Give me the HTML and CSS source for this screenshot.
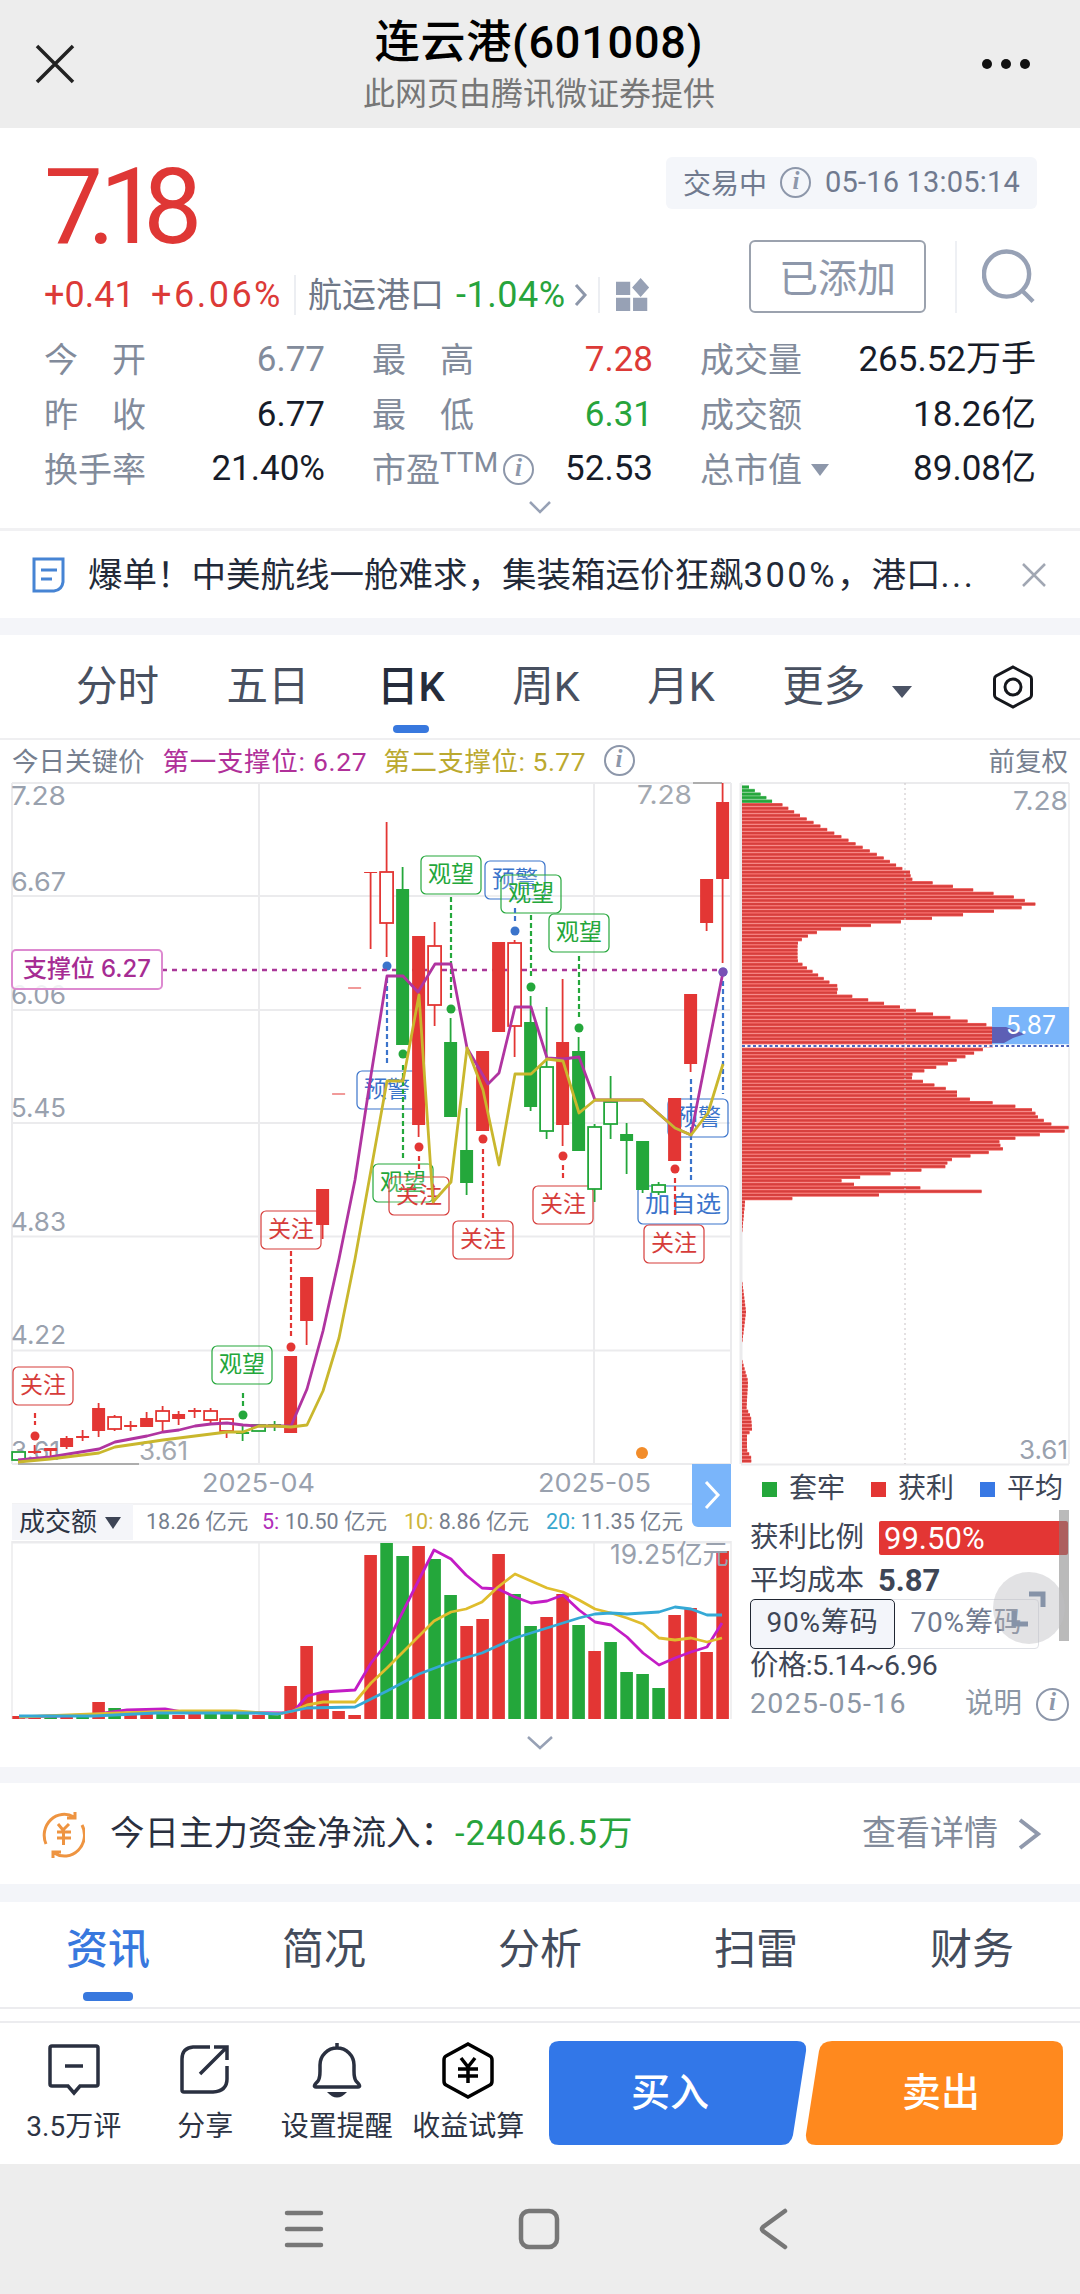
FILE: index.html
```html
<!DOCTYPE html>
<html lang="zh-CN">
<head>
  <meta charset="UTF-8">
  <meta name="viewport" content="width=device-width, initial-scale=1.0">
  <title>连云港(601008)</title>
  <link rel="stylesheet" href="styles.css">
</head>
<body>
  <header class="topbar">
    <svg class="topbar-close" width="40" height="40" viewBox="0 0 40 40"><path d="M2 2L38 38M38 2L2 38" /></svg>
    <div class="topbar-title">
      <h1>连云港(601008)</h1>
      <p>此网页由腾讯微证券提供</p>
    </div>
    <svg class="topbar-more" width="50" height="12" viewBox="0 0 50 12"><circle cx="6" cy="6" r="5" /><circle cx="25" cy="6" r="5" /><circle cx="44" cy="6" r="5" /></svg>
  </header>

  <section class="quote">
    <div class="quote-top">
      <div class="quote-left">
        <div class="price">7.18</div>
        <div class="change">
          <span class="red diff">+0.41</span>
          <span class="red percent">+6.06%</span>
          <span class="sector">航运港口</span>
          <span class="green sector-percent">-1.04%</span>
          <svg class="sector-arrow" width="14" height="24" viewBox="0 0 14 24"><path d="M2 2L11 12L2 22" /></svg>
          <svg class="blocks" width="38" height="36" viewBox="0 0 38 36"><path d="M0 4h15v14H0zM0 21h15v14H0zM18 21h15v14H18zM26 0l9 10-9 10-9-10z" /></svg>
        </div>
      </div>
      <div class="quote-right">
        <div class="status">交易中 <i class="info">i</i> <span>05-16 13:05:14</span></div>
        <div class="actions">
          <button class="added">已添加</button>
          <svg class="search" width="56" height="56" viewBox="0 0 56 56"><circle cx="25" cy="25" r="23" /><path d="M41 42L52 53" /></svg>
        </div>
      </div>
    </div>
    <div class="stats">
      <div class="stat"><span class="label"><b>今</b><b>开</b></span><span class="gray">6.77</span></div>
      <div class="stat"><span class="label"><b>最</b><b>高</b></span><span class="red">7.28</span></div>
      <div class="stat"><span class="label">成交量</span><span>265.52万手</span></div>
      <div class="stat"><span class="label"><b>昨</b><b>收</b></span><span>6.77</span></div>
      <div class="stat"><span class="label"><b>最</b><b>低</b></span><span class="green">6.31</span></div>
      <div class="stat"><span class="label">成交额</span><span>18.26亿</span></div>
      <div class="stat"><span class="label">换手率</span><span>21.40%</span></div>
      <div class="stat"><span class="label ttm">市盈<small>TTM</small> <i class="info">i</i></span><span>52.53</span></div>
      <div class="stat"><span class="label">总市值<em class="triangle"></em></span><span>89.08亿</span></div>
    </div>
    <svg class="expand" width="26" height="16" viewBox="0 0 26 16"><path d="M3 3L13 13L23 3" /></svg>
  </section>

  <section class="news">
    <svg class="news-icon" width="33" height="36" viewBox="0 0 33 36"><path d="M2 2H31V25Q30 33 22 34H2ZM9 13H25M9 22H20" /></svg>
    <p>爆单！中美航线一舱难求，集装箱运价狂飙<b>300%</b>，港口<b>...</b></p>
    <svg class="news-close" width="26" height="26" viewBox="0 0 26 26"><path d="M2 2L24 24M24 2L2 24" /></svg>
  </section>

  <nav class="periods">
    <span>分时</span>
    <span>五日</span>
    <span class="active">日K</span>
    <span>周K</span>
    <span>月K</span>
    <span>更多<em class="triangle"></em></span>
    <svg class="settings" width="42" height="44" viewBox="0 0 42 44"><path d="M21 2L38 11Q39.500 12 39.500 14V30Q39.500 32 38 33L21 42L4 33Q2.500 32 2.500 30V14Q2.500 12 4 11Z" /><circle cx="21" cy="22" r="8" /></svg>
  </nav>

  <div class="keyprice">
    <span>今日关键价</span>
    <span class="magenta">第一支撑位: 6.27</span>
    <span class="olive">第二支撑位: 5.77</span>
    <i class="info">i</i>
    <span class="adjust">前复权</span>
  </div>

  <section class="charts">
    <div class="charts-left">
      <svg id="kline" width="736" height="721" viewBox="0 782 736 721"></svg>
      <div class="volume-head">
        <span class="volume-type">成交额<em class="triangle"></em></span>
        <span class="v0">18.26 亿元</span>
        <span class="v5"><b>5:</b> 10.50 亿元</span>
        <span class="v10"><b>10:</b> 8.86 亿元</span>
        <span class="v20"><b>20:</b> 11.35 亿元</span>
      </div>
      <svg id="volume" width="736" height="180" viewBox="0 1541 736 180"></svg>
      <div class="drawer"><svg width="20" height="32" viewBox="0 0 20 32"><path d="M4 3L16 16L4 29" /></svg></div>
    </div>
    <div class="charts-right">
      <svg id="chips" width="344" height="684" viewBox="736 782 344 684"></svg>
      <div class="legend">
        <span class="trapped">套牢</span>
        <span class="profit">获利</span>
        <span class="average">平均</span>
      </div>
      <div class="chip-row">获利比例<span class="profit-bar">99.50%</span></div>
      <div class="chip-row cost">平均成本<strong>5.87</strong></div>
      <div class="chip-tabs"><span class="active">90%筹码</span><span>70%筹码</span></div>
      <div class="chip-row range">价格:5.14~6.96</div>
      <div class="chip-row date"><b>2025-05-16</b><span>说明</span><i class="info">i</i></div>
      <div class="scrollbar"></div>
      <div class="zoom-button"><svg width="72" height="72" viewBox="0 0 72 72"><path d="M36 22H50V35M21 39V52H35" /></svg></div>
    </div>
  </section>
  <svg class="expand more-indicators" width="30" height="18" viewBox="0 0 30 18"><path d="M3 3L15 14L27 3" /></svg>

  <section class="fund">
    <svg class="fund-icon" width="44" height="48" viewBox="0 0 44 48"><path d="M5 34A20 21 0 0 1 33 7M34 2V8H26M41 15A20 21 0 0 1 13 43M12 48V42H20M17 14L22 20L28 14M22.500 20V35M16 22H30M16 28H30" /></svg>
    <p>今日主力资金净流入：</p>
    <span class="green">-24046.5万</span>
    <a>查看详情</a>
    <svg class="fund-arrow" width="25" height="32" viewBox="0 0 25 32"><path d="M3 2L21 16L3 30" /></svg>
  </section>

  <nav class="sections">
    <span class="active">资讯</span>
    <span>简况</span>
    <span>分析</span>
    <span>扫雷</span>
    <span>财务</span>
  </nav>

  <footer class="bottom">
    <div class="tools">
      <div class="tool">
        <svg width="58" height="60" viewBox="0 0 58 60"><path d="M7 6H51Q53 6 53 8V44Q53 46 51 46H35L29 53L23 46H7Q5 46 5 44V8Q5 6 7 6ZM20 26H38" /></svg>
        <span>3.5万评</span>
      </div>
      <div class="tool">
        <svg width="58" height="60" viewBox="0 0 58 60"><path d="M34 7H17Q6 8 6 19V50Q6 52 8 52H37Q51 51 51 39V26M24 34L51 7M38 7H51V20" /></svg>
        <span>分享</span>
      </div>
      <div class="tool">
        <svg width="58" height="60" viewBox="0 0 58 60"><path d="M29 3V8M10 41Q12 38 12 31V25A17 17 0 0 1 46 25V31Q46 38 48 41Q54 47 50 47H8Q4 47 10 41Z" /><path class="fill" d="M19 52H39Q29 63 19 52Z" /></svg>
        <span>设置提醒</span>
      </div>
      <div class="tool black">
        <svg width="58" height="60" viewBox="0 0 58 60"><path d="M29 4L51 16Q53 17 53 20V41Q53 44 51 45L29 57L7 45Q5 44 5 41V20Q5 17 7 16ZM22 18L29 27L36 18M29 27V43M19 29H39M19 36H39" /></svg>
        <span>收益试算</span>
      </div>
    </div>
    <div class="trade">
      <svg width="531" height="106" viewBox="0 0 531 106">
        <path class="buy" d="M10 1H248Q258 1 257 11L244 95Q242 105 232 105H10Q0 105 0 95V11Q0 1 10 1Z" />
        <path class="sell" d="M283 1H504Q514 1 514 11V95Q514 105 504 105H267Q256 105 257 94L270 11Q272 1 283 1Z" />
        <text x="121" y="66">买入</text>
        <text x="392" y="66">卖出</text>
      </svg>
    </div>
  </footer>

  <div class="system">
    <svg width="42" height="42" viewBox="0 0 42 42"><path d="M4 5H38M4 21H38M4 37H38" /></svg>
    <svg width="42" height="42" viewBox="0 0 42 42"><rect x="3" y="3" width="36" height="36" rx="8" /></svg>
    <svg width="42" height="42" viewBox="0 0 42 42"><path d="M32 3L10 19Q8 21 10 23L32 39" /></svg>
  </div>
  <script src="script.js"></script>
</body>
</html>
```
FILE: styles.css
```css
* {
  box-sizing: border-box;
}
body {
  margin: 0;
  width: 1080px;
  background-color: #fff;
  color: #2a303f;
  font-family: Roboto, "Noto Sans CJK SC", sans-serif;
  font-size: 34px;
}
h1,
p {
  margin: 0;
  font-weight: normal;
}
b {
  font-weight: normal;
}
svg {
  display: block;
  flex: none;
  fill: none;
}
span,
p,
h1 {
  white-space: nowrap;
}
.red {
  color: #dc3a37;
}
.green {
  color: #27a43c;
}
.gray {
  color: #828b9b;
}
.info {
  display: inline-block;
  width: 31px;
  height: 31px;
  border: 2.5px solid #8d97aa;
  border-radius: 50%;
  color: #8d97aa;
  font: italic bold 25px/24px "Liberation Serif", serif;
  text-align: center;
}
.triangle {
  display: inline-block;
  border: 9px solid transparent;
  border-top: 12px solid #8d97aa;
  border-bottom: 0;
}

/* top bar */
.topbar {
  display: flex;
  justify-content: space-between;
  height: 128px;
  padding: 12px 49px 0 35px;
  background-color: #ededed;
}
.topbar-close {
  margin-top: 32px;
  stroke: #222;
  stroke-width: 3.5;
}
.topbar-more {
  margin-top: 46px;
  fill: #111;
}
.topbar-title {
  padding-left: 22px;
  text-align: center;
}
.topbar h1 {
  color: #000;
  font-size: 45px;
  font-weight: 500;
  line-height: 62px;
  letter-spacing: .8px;
}
.topbar p {
  color: #777;
  font-size: 32px;
  line-height: 41px;
}

/* quote */
.quote {
  height: 403px;
  border-bottom: 3px solid #f1f1f3;
}
.quote-top {
  display: flex;
  justify-content: space-between;
  height: 205px;
  padding: 29px 43px 0 44px;
}
.price {
  height: 100px;
  color: #df3735;
  font-size: 105px;
  line-height: 101px;
  letter-spacing: -15.5px;
}
.change {
  display: flex;
  align-items: center;
  height: 40px;
  margin-top: 18px;
  font-size: 36px;
  line-height: 40px;
}
.diff {
  width: 107px;
}
.percent {
  width: 143px;
  letter-spacing: 2.5px;
}
.sector {
  padding-left: 12px;
  border-left: 2px solid #eceef2;
  color: #6f7888;
  font-size: 34px;
}
.sector-percent {
  width: 118px;
  margin-left: 12px;
  letter-spacing: .5px;
}
.sector-arrow {
  stroke: #8d97aa;
  stroke-width: 3;
}
.blocks {
  margin-left: 10px;
  width: 54px;
  padding-left: 16px;
  border-left: 2px solid #eceef2;
  fill: #97a1b5;
}
.quote-right {
  display: flex;
  flex-direction: column;
  align-items: flex-end;
}
.status {
  display: flex;
  align-items: center;
  justify-content: space-between;
  width: 371px;
  height: 52px;
  padding: 0 17px 2px;
  border-radius: 6px;
  background-color: #f4f6fa;
  color: #707a8f;
  font-size: 28px;
}
.status span {
  font-size: 29px;
  letter-spacing: .2px;
}
.actions {
  display: flex;
  align-items: center;
  margin-top: 31px;
}
.added {
  width: 177px;
  height: 73px;
  margin-right: 29px;
  padding-bottom: 5px;
  border: 2px solid #9ba2ae;
  border-radius: 6px;
  background-color: #fff;
  color: #8d97aa;
  font: 39px Roboto, "Noto Sans CJK SC", sans-serif;
}
.search {
  width: 82px;
  height: 72px;
  padding: 8px 0 8px 25px;
  border-left: 2px solid #eef0f4;
  stroke: #97a1b5;
  stroke-width: 4.5;
}
.stats {
  display: grid;
  grid-template-columns: 281px 281px 336px;
  column-gap: 47px;
  padding-left: 44px;
}
.stat {
  display: flex;
  justify-content: space-between;
  height: 54.7px;
  color: #171c29;
  font-size: 34px;
  line-height: 54px;
}
.stat > span:last-child {
  font-size: 35px;
}
.stat .gray {
  color: #828b9b;
}
.stat .red {
  color: #dc3a37;
}
.stat .green {
  color: #27a43c;
}
.label {
  display: flex;
  justify-content: space-between;
  align-items: center;
  min-width: 102px;
  color: #828b9b;
}
.label small {
  align-self: flex-start;
  margin-right: 5px;
  font-size: 28px;
  line-height: 42px;
}
.label .triangle {
  margin-left: 9px;
}
.expand {
  margin: 2px auto 0;
  stroke: #97a1b5;
  stroke-width: 2.5;
}

/* news */
.news {
  display: flex;
  align-items: center;
  height: 104px;
  padding: 0 33px 0 32px;
  border-bottom: 17px solid #f4f5f9;
}
.news-icon {
  stroke: #4684d4;
  stroke-width: 3;
}
.news p {
  flex: 1;
  margin-left: 23px;
  padding-bottom: 5px;
  color: #222938;
  font-size: 34.5px;
}
.news b {
  letter-spacing: 2.5px;
}
.news-close {
  stroke: #a1a7b3;
  stroke-width: 2.5;
}

/* period tabs */
.periods {
  display: flex;
  align-items: center;
  height: 105px;
  padding-left: 76px;
  border-bottom: 2px solid #efeff1;
  color: #485060;
  font-size: 41.5px;
}
.periods span {
  position: relative;
  margin-right: 67.5px;
  line-height: 102px;
}
.periods .active {
  color: #252c3b;
  font-weight: 500;
}
.periods .active::after {
  position: absolute;
  bottom: 5px;
  left: 50%;
  width: 36px;
  height: 8px;
  margin-left: -18px;
  border-radius: 4px;
  background-color: #3878de;
  content: "";
}
.periods .triangle {
  margin-left: 27px;
  border-width: 10px;
  border-top: 12px solid #4b5365;
  border-bottom: 0;
  vertical-align: 3px;
}
.settings {
  margin-left: 12px;
  stroke: #15171c;
  stroke-width: 3;
}
.keyprice {
  display: flex;
  align-items: center;
  height: 42px;
  padding: 0 12px 4px;
  color: #767f8f;
  font-size: 26.5px;
}
.magenta {
  width: 221px;
  margin-left: 18px;
  color: #b03099;
  letter-spacing: .7px;
}
.olive {
  width: 220px;
  color: #bba92f;
  letter-spacing: .5px;
}
.keyprice .info {
  margin-top: 2px;
}
.adjust {
  margin-left: auto;
}

/* charts */
.charts {
  display: flex;
  height: 939px;
}
.charts-left,
.charts-right {
  position: relative;
}
.charts-left {
  width: 736px;
}
.charts-right {
  width: 344px;
}
.charts svg text {
  font-family: Inter, "Noto Sans CJK SC", sans-serif;
}
.volume-head {
  display: flex;
  align-items: center;
  height: 38px;
  margin: 0 5px 0 12px;
  padding-bottom: 2px;
  border-top: 2px solid #f2f2f4;
  color: #777f8e;
  font-size: 21.5px;
  line-height: 32px;
}
.volume-type {
  width: 121px;
  height: 36px;
  margin-right: 13px;
  padding-left: 7px;
  background-color: #f4f5f9;
  color: #2d3444;
  font-size: 26px;
  line-height: 36px;
}
.volume-type .triangle {
  margin-left: 8px;
  border-width: 8px;
  border-top: 12px solid #3d4455;
  border-bottom: 0;
  vertical-align: 2px;
}
.v0 {
  width: 116px;
}
.v5,
.v10 {
  width: 142px;
}
.v5 b {
  color: #b02cb9;
}
.v10 b {
  color: #cdb53a;
}
.v20 b {
  color: #38a7ce;
}
.drawer {
  position: absolute;
  top: 682px;
  left: 692px;
  width: 39px;
  height: 63px;
  padding: 15px 10px;
  border-radius: 0 0 0 6px;
  background-color: #7ab5fa;
}
.drawer path {
  stroke: #fff;
  stroke-width: 3;
}
.legend {
  display: flex;
  height: 46px;
  padding-left: 26px;
  color: #3e4656;
  font-size: 28px;
  line-height: 46px;
}
.legend span {
  display: flex;
  flex: none;
  align-items: center;
  width: 109px;
}
.legend span::before {
  width: 15px;
  height: 15px;
  margin-right: 12px;
  content: "";
}
.trapped::before {
  background-color: #24a73b;
}
.profit::before {
  background-color: #e33634;
}
.average::before {
  background-color: #3878e4;
}
.chip-row {
  display: flex;
  align-items: center;
  height: 44px;
  padding-left: 14px;
  color: #3e4656;
  font-size: 28.5px;
  line-height: 44px;
}
.legend + .chip-row {
  height: 52px;
}
.profit-bar {
  width: 189px;
  height: 34px;
  margin-left: 15px;
  padding-left: 5px;
  border-radius: 2px;
  background-color: #e33634;
  color: #fff;
  font-size: 31px;
  line-height: 36px;
}
.chip-row.cost {
  height: 33px;
}
.cost strong {
  margin-left: 14px;
  font-size: 31px;
}
.chip-tabs {
  display: flex;
  width: 289px;
  height: 50px;
  margin: 2px 0 0 14px;
  border: 1px solid #dfe1e6;
  border-radius: 4px;
  color: #707a8f;
  font-size: 28px;
  line-height: 46px;
  letter-spacing: .8px;
}
.chip-tabs span {
  flex: 1;
  text-align: center;
}
.chip-tabs .active {
  height: 50px;
  margin: -1px 0 0 -1px;
  border: 1.500px solid #202632;
  border-radius: 5px;
  background-color: #f3f5fa;
  color: #3e4656;
}
.chip-row.range {
  height: 34px;
  letter-spacing: -.6px;
}
.chip-row.date {
  height: 42px;
  padding-right: 11px;
  color: #8d97a5;
}
.date b {
  letter-spacing: 1.3px;
}
.date span {
  margin-left: auto;
}
.date .info {
  width: 33px;
  height: 33px;
  margin-left: 14px;
}
.scrollbar {
  position: absolute;
  top: 728px;
  right: 11px;
  width: 10px;
  height: 131px;
  background-color: rgba(130, 130, 130, .55);
}
.zoom-button {
  position: absolute;
  top: 790px;
  right: 15px;
  width: 72px;
  height: 72px;
  border-radius: 50%;
  background-color: rgba(190, 190, 195, .45);
}
.zoom-button path {
  stroke: #8693a8;
  stroke-width: 5;
}
.more-indicators {
  height: 18px;
  margin: 13px auto 15px;
}

/* fund flow */
.fund {
  display: flex;
  align-items: center;
  height: 135px;
  padding: 0 38px 0 41px;
  border-top: 16px solid #f4f5f9;
  border-bottom: 18px solid #f3f5f9;
  font-size: 34.5px;
  line-height: 40px;
}
.fund-icon {
  stroke: #ee9441;
  stroke-width: 3;
}
.fund p {
  width: 343px;
  margin: 0 0 2px 25px;
}
.fund .green {
  margin-left: 2px;
  margin-bottom: 2px;
  letter-spacing: 1px;
}
.fund a {
  margin-left: auto;
  margin-bottom: 2px;
  color: #828b9b;
  font-size: 34px;
}
.fund-arrow {
  margin-left: 19px;
  stroke: #9099ac;
  stroke-width: 4;
}

/* section tabs */
.sections {
  display: flex;
  height: 107px;
  border-bottom: 2px solid #ececef;
  color: #444c5c;
  font-size: 42px;
  line-height: 96px;
}
.sections span {
  position: relative;
  flex: 1;
  text-align: center;
}
.sections .active {
  color: #3878de;
  font-weight: 500;
}
.sections .active::after {
  position: absolute;
  bottom: 6px;
  left: 83px;
  width: 50px;
  height: 9px;
  border-radius: 4px;
  background-color: #3878de;
  content: "";
}

/* bottom bar */
.bottom {
  display: flex;
  height: 143px;
  margin-top: 12px;
  padding-top: 17px;
  border-top: 2px solid #ececef;
}
.tools {
  display: flex;
  width: 549px;
  padding-left: 8px;
}
.tool {
  display: flex;
  flex-direction: column;
  align-items: center;
  width: 131.500px;
  color: #2d3444;
  font-size: 28px;
  line-height: 40px;
}
.tool svg {
  margin-bottom: 7px;
  stroke: #2a3040;
  stroke-width: 3.5;
}
.tool .fill {
  fill: #2a3040;
  stroke: none;
}
.black svg {
  stroke: #000;
}
.buy {
  fill: #3277e8;
}
.sell {
  fill: #ff891e;
}
.trade text {
  fill: #fff;
  font-size: 39px;
  font-weight: 500;
  text-anchor: middle;
}

/* system navigation */
.system {
  display: flex;
  justify-content: center;
  gap: 193px;
  height: 130px;
  padding: 44px 2px 0 0;
  background-color: #ededed;
}
.system svg {
  stroke: #777;
  stroke-width: 4.5;
  stroke-linecap: round;
}
```
FILE: script.js
```js
const RED = "#e33634";
const GREEN = "#24a73b";
const BLUE = "#3b74cb";
const MAGENTA = "#b034a0";
const YELLOW = "#c9b72d";
const GRID = "#ebebed";

const x = (i) => 18.6 + i * 16;

function line(x1, y1, x2, y2, color, width, dash) {
  return `<line x1="${x1}" y1="${y1}" x2="${x2}" y2="${y2}" stroke="${color}" stroke-width="${width || 2}" stroke-dasharray="${dash || "none"}" />`;
}
function rect(left, top, width, height, color, hollow) {
  let paint = hollow ? `fill="#fff" stroke="${color}" stroke-width="1.8"` : `fill="${color}"`;
  return `<rect x="${left}" y="${top}" width="${width}" height="${height}" ${paint} />`;
}
function text(left, baseline, value, width, color, size, weight) {
  return `<text x="${left}" y="${baseline}" textLength="${width}" lengthAdjust="spacingAndGlyphs" fill="${color}" font-size="${size || 26}" font-weight="${weight || 400}">${value}</text>`;
}
function curve(points, color) {
  return `<polyline points="${points}" fill="none" stroke="${color}" stroke-width="2.8" stroke-linejoin="round" />`;
}

// [color, body top, body bottom, high, low, hollow]
const candles = [
  ["g", 1452, 1460, 1452, 1460, 1], ["r", 1451, 1453, 1445, 1454], ["r", 1448, 1451, 1448, 1459],
  ["r", 1438, 1447, 1436, 1449], ["r", 1436, 1438, 1430, 1441], ["r", 1408, 1431, 1403, 1437],
  ["r", 1417, 1429, 1415, 1431, 1], ["r", 1425, 1427, 1421, 1431], ["r", 1418, 1427, 1412, 1427],
  ["r", 1411, 1421, 1406, 1431, 1], ["r", 1414, 1419, 1411, 1425], ["r", 1410, 1412, 1408, 1418],
  ["r", 1411, 1420, 1408, 1423, 1], ["r", 1419, 1431, 1419, 1438, 1], ["g", 1432, 1434, 1425, 1441],
  ["g", 1425, 1431, 1425, 1431, 1], ["g", 1424, 1427, 1421, 1431], ["r", 1356, 1433, 1356, 1433],
  ["r", 1277, 1321, 1277, 1345], ["r", 1189, 1225, 1189, 1239], ["r", 1093.500, 1094.500, 1094, 1094],
  ["r", 987.500, 988.500, 988, 988], ["r", 872, 873, 872, 949], ["r", 872, 923, 822, 957, 1],
  ["g", 889, 1045, 867, 1045], ["r", 936, 1125, 936, 1137], ["r", 946, 1005, 922, 1026, 1],
  ["g", 1042, 1117, 1018, 1117], ["g", 1150, 1183, 1108, 1195], ["r", 1051, 1131, 1051, 1131],
  ["r", 942, 1032, 942, 1032], ["r", 943, 1026, 940, 1057, 1], ["g", 1022, 1107, 996, 1111],
  ["g", 1067, 1131, 1007, 1139, 1], ["r", 1042, 1125, 979, 1146], ["g", 1051, 1151, 1037, 1151],
  ["g", 1127, 1189, 1124, 1202, 1], ["g", 1102, 1124, 1076, 1139, 1], ["g", 1134, 1141, 1123, 1174],
  ["g", 1141, 1190, 1141, 1193], ["g", 1185, 1192, 1182, 1195, 1], ["r", 1098, 1161, 1098, 1161],
  ["r", 994, 1064, 994, 1072], ["r", 879, 923, 879, 931], ["r", 802, 879, 783, 963]
];

// [left, top, label, color, width]
const tags = [
  [421, 856, "观望", GREEN], [485, 861, "预警", BLUE], [501, 875, "观望", GREEN], [549, 914, "观望", GREEN],
  [357, 1071, "预警", BLUE], [373, 1164, "观望", GREEN], [389, 1177, "关注", "#d63c3a"],
  [453, 1221, "关注", "#d63c3a"], [533, 1186, "关注", "#d63c3a"], [668, 1099, "预警", BLUE],
  [638, 1186, "加自选", BLUE, 90], [644, 1225, "关注", "#d63c3a"], [261, 1211, "关注", "#d63c3a"],
  [212, 1346, "观望", GREEN], [13, 1367, "关注", "#d63c3a"]
];

// [x, stem top, stem bottom, dot y, color]
const marks = [
  [451, 897, 1000, 1009, GREEN], [515, 908, 922, 931, BLUE], [531, 915, 977, 987, GREEN],
  [579, 956, 1018, 1028, GREEN], [387, 978, 1063, 966, BLUE], [403, 1065, 1158, 1054, GREEN],
  [419, 1156, 1169, 1147, RED], [483, 1149, 1220, 1139, RED], [563, 1165, 1180, 1156, RED],
  [675, 1178, 1217, 1169, RED], [691, 1079, 1180, 0, BLUE], [723, 981, 1094, 972, BLUE],
  [291, 1251, 1338, 1347, RED], [243, 1393, 1407, 1415, GREEN], [35, 1413, 1425, 1436, RED]
];

const support1 = "18,1460 50,1457 99,1449 115,1442 131,1439 147,1436 163,1432 179,1430 195,1426 211,1424 227,1423 243,1425 259,1426 291,1426 307,1389 323,1331 339,1259 355,1180 371,1075 387,976 403,976 418,992 435,964 451,964 467,1048 488,1084 499,1073 515,1007 531,1007 547,1058 563,1059 579,1057 595,1100 643,1100 675,1128 691,1135 723,972";
const support2 = "18,1462 50,1459 99,1453 115,1447 163,1440 195,1436 227,1432 243,1432 259,1426 275,1426 291,1427 307,1425 323,1391 339,1338 355,1259 371,1170 387,1081 403,1081 419,995 433,1202 451,1182 467,1048 483,1090 499,1165 515,1074 531,1074 547,1059 563,1061 579,1113 595,1100 643,1100 675,1128 691,1135 708,1113 723,1064";

function drawKline() {
  let out = "";
  [783, 896, 1010, 1123, 1236.500, 1350.500, 1464].forEach((y) => (out += line(12, y, 731, y, GRID)));
  [12, 259, 594, 731].forEach((left) => (out += line(left, 783, left, 1464, GRID)));
  [["7.28", 805], ["6.67", 891], ["6.06", 1004], ["5.45", 1117], ["4.83", 1231], ["4.22", 1344], ["3.61", 1460]].forEach(
    (tick) => (out += text(11, tick[1], tick[0], tick[0] === "3.61" ? 49 : 55, "#99a1ae"))
  );
  out += text(139, 1460, "3.61", 49, "#a3a8b0") + text(637, 804, "7.28", 55, "#a3a8b0");
  out += line(18, 1464, 139, 1464, "#adadad") + line(693, 783, 722, 783, "#adadad");
  out += text(202, 1492, "2025-04", 113, "#99a1ae") + text(538, 1492, "2025-05", 113, "#99a1ae");
  tags.forEach((tag) => {
    let width = tag[4] || 60;
    out += `<rect x="${tag[0]}" y="${tag[1]}" width="${width}" height="38" rx="5" fill="#fff" fill-opacity=".2" stroke="${tag[3]}" stroke-width="1.2" />`;
    out += text(tag[0] + 7, tag[1] + 26, tag[2], width - 14, tag[3], 23);
  });
  marks.forEach((mark) => {
    out += line(mark[0], mark[1], mark[0], mark[2], mark[4], 2.2, "5 3");
    if (mark[3]) {
      out += `<circle cx="${mark[0]}" cy="${mark[3]}" r="4.5" fill="${mark[4]}" />`;
    }
  });
  out += line(162, 970, 722, 970, "#aa3799", 2.5, "5 5");
  candles.forEach((candle, i) => {
    let color = candle[0] === "r" ? RED : GREEN;
    out += line(x(i), candle[3], x(i), candle[4], color, 1.8);
    out += rect(x(i) - 6.5, candle[1], 13, candle[2] - candle[1], color, candle[5]);
  });
  out += curve(support1, MAGENTA) + curve(support2, YELLOW);
  out += `<circle cx="723" cy="972" r="4.5" fill="#7950b5" />`;
  out += `<circle cx="642" cy="1453" r="6" fill="#f28c2a" />`;
  out += `<rect x="12" y="950" width="150" height="39" rx="4" fill="#fff" fill-opacity=".85" stroke="#dd8ad0" stroke-width="2" />`;
  out += text(23, 977, "支撑位 6.27", 128, "#a62c93", 24, 500);
  document.querySelector("#kline").innerHTML = out;
}

const volumes = "r3 r2 g2 r2 g3 r17 g11 r5 r5 g5 r4 r5 g5 g5 g5 r4 g4 r33 r73 r26 r8 r4 r164 g176 g163 r173 g160 g124 r93 r100 r165 g125 g93 r102 r125 g94 r68 g77 g47 g45 g31 r104 r111 r67 r168".split(" ");
const ma5 = "19,1717 90,1715 127,1710 165,1709 182,1712 283,1713 295,1710 307,1696 323,1692 355,1690 371,1663 387,1643 434,1550 451,1559 466,1575 482,1588 498,1589 515,1597 531,1603 547,1601 563,1595 579,1610 595,1622 611,1625 627,1637 643,1653 659,1665 675,1658 691,1652 707,1647 722,1623";
const ma10 = "19,1717 118,1713 182,1711 236,1711 278,1714 293,1711 307,1705 323,1702 355,1702 371,1683 387,1668 403,1652 419,1636 434,1621 451,1612 466,1609 482,1602 498,1587 515,1574 531,1581 547,1588 563,1592 579,1600 595,1609 611,1613 627,1618 643,1624 659,1638 675,1640 691,1638 707,1642 722,1638";
const ma20 = "19,1716 94,1716 156,1713 255,1713 278,1714 293,1711 307,1708 355,1707 387,1691 419,1674 451,1662 482,1653 515,1638 547,1628 579,1618 595,1614 611,1613 627,1614 659,1612 675,1607 691,1609 707,1615 722,1615";

function drawVolume() {
  let out = line(12, 1542, 731, 1542, GRID, 3);
  [12, 259, 594, 731].forEach((left) => (out += line(left, 1541, left, 1719, GRID, 1.5)));
  volumes.forEach((volume, i) => {
    let height = Number(volume.slice(1));
    out += rect(x(i) - 6.3, 1719 - height, 12.6, height, volume[0] === "r" ? RED : GREEN);
  });
  out += curve(ma5, "#c31cc5") + curve(ma10, "#dfbd2d") + curve(ma20, "#35a9d6");
  out += text(610, 1564, "19.25亿元", 119, "#99a1ae", 27);
  document.querySelector("#volume").innerHTML = out;
}

// [price level y, bar end x]
const levels = [
  [787, 749], [803, 775], [804.500, 782], [816, 801], [830, 828], [843.500, 855], [857, 882], [869, 903], [872, 910],
  [879, 911], [897, 1014], [904, 1035.500], [908, 1020], [911.500, 991], [922, 899], [929, 840], [933, 813], [940, 801],
  [943.500, 797.500], [960.500, 797.500], [968, 807], [982.500, 830], [986, 838], [993, 837], [996, 851], [1010.500, 916],
  [1021, 967], [1028, 1004], [1035, 1025], [1046, 993], [1049, 984], [1064, 947], [1075, 910], [1078, 912],
  [1092, 957], [1096, 957], [1099, 969], [1106.500, 1017], [1110, 1033], [1117, 1038], [1123.500, 1049], [1127.600, 1069],
  [1131, 1065], [1138, 1016], [1142, 998], [1149, 1003], [1152.500, 988], [1160, 949], [1167, 945], [1170, 922],
  [1177, 861], [1181, 840], [1184.500, 855], [1188, 924], [1191.500, 984], [1195, 876], [1199, 779], [1202, 745],
  [1218, 743.500], [1234, 742], [1280, 742], [1312, 746], [1344, 742], [1360, 742], [1381, 748], [1408, 746.500],
  [1417, 751], [1429, 752], [1436, 747], [1450, 747], [1459, 752], [1464, 750]
];

function levelEnd(y) {
  let next = levels.findIndex((level) => level[0] >= y);
  if (next < 1) {
    return levels[0][1];
  }
  let [y1, x1] = levels[next - 1];
  let [y2, x2] = levels[next];
  return x1 + ((x2 - x1) * (y - y1)) / (y2 - y1);
}

function drawChips() {
  let out = line(741, 783, 1069, 783, GRID) + line(741, 1464.500, 1069, 1464.500, GRID);
  out += line(741, 783, 741, 1464, GRID, 3) + line(1069, 783, 1069, 1464, GRID, 1.5);
  for (let y = 787; y < 1464; y += 3.547) {
    let end = levelEnd(y);
    if (end > 742.300) {
      out += rect(742, y - 1.700, end - 742, 3.500, y < 804 ? "#57ba67" : "#f26360");
      out += rect(742, y - 1, end - 742, 2, y < 804 ? GREEN : "#d63f3d");
    }
  }
  out += line(905, 783, 905, 1464, "#c9c3c6", 1, "2 3");
  out += `<g class="average-label">${rect(992, 1007, 77, 37.500, "#7ab5fa")}</g>`;
  out += `<path d="M992 1027H1006L1025 1034L1013 1038L1004 1043H992Z" fill="#5d5fb5" />`;
  out += line(742, 1046, 1069, 1046, "#fff", 3) + line(742, 1046, 1069, 1046, "#4b63bd", 2, "3 2.5");
  out += text(1006, 1034, "5.87", 50, "#fff", 25);
  out += text(1013, 810, "7.28", 55, "#99a1ae") + text(1019, 1459, "3.61", 49, "#99a1ae");
  document.querySelector("#chips").innerHTML = out;
}

drawKline();
drawVolume();
drawChips();
```
